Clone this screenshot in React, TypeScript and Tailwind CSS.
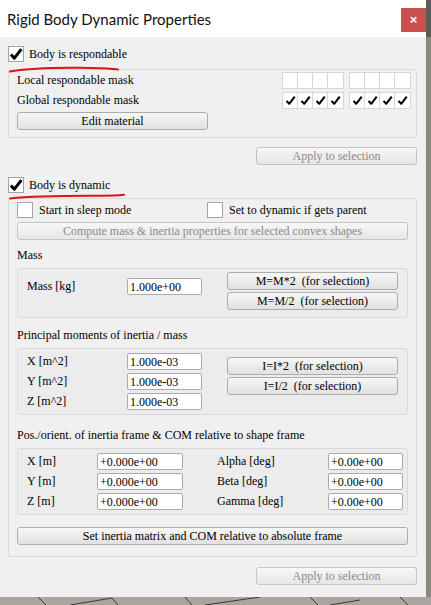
import React from "react";

const btn =
  "flex items-center justify-center h-[18px] rounded-[3px] border border-[#acacac] bg-linear-to-b from-[#f7f7f7] to-[#e1e1e1] leading-none";
const btnOff =
  "flex items-center justify-center h-[18px] rounded-[3px] border border-[#c4c4c4] bg-linear-to-b from-[#f7f7f7] to-[#e6e6e6] leading-none text-[#8a8a8a]";
const field =
  "h-[17px] bg-white border border-[#a9abb0] rounded-[2px] pl-[2px] flex items-center leading-none";
const group = "border border-[#d9d9d9] rounded-[3px]";

function Check({ size = 12, weight = 2.2 }: { size?: number; weight?: number }) {
  return (
    <svg width={size} height={size} viewBox="0 0 12 12">
      <path d="M1.6 6.4 L4.6 9.6 L10.6 1.8" fill="none" stroke="#000" strokeWidth={weight} strokeLinejoin="round" />
    </svg>
  );
}

function Box({ checked }: { checked?: boolean }) {
  return (
    <div className="w-[16px] h-[16px] bg-white border border-[#a3a3a3] flex items-center justify-center shrink-0">
      {checked && <Check size={14} weight={2.6} />}
    </div>
  );
}

function Mask({ checked }: { checked?: boolean }) {
  return (
    <div className="flex border border-[#d6d6d6] bg-white">
      {[0, 1, 2, 3].map((i) => (
        <div
          key={i}
          className={`w-[15px] h-[15px] flex items-center justify-center ${i < 3 ? "border-r border-[#d6d6d6]" : ""}`}
        >
          {checked && <Check size={11} />}
        </div>
      ))}
    </div>
  );
}

function MaskRow({ label, checked }: { label: string; checked?: boolean }) {
  return (
    <div className="flex items-center justify-between h-[16px] -mr-[3px]">
      <span>{label}</span>
      <div className="flex gap-[5px]">
        <Mask checked={checked} />
        <Mask checked={checked} />
      </div>
    </div>
  );
}

export default function App() {
  return (
    <div className="w-[431px] h-[605px] overflow-hidden bg-[#aaa69d] flex flex-col font-['Liberation_Serif',serif] text-[12px] text-black">
      <div className="flex h-[597px]">
        <div className="relative w-[426px] h-full bg-[#f0f0f0] flex flex-col">
          {/* title bar */}
          <div className="h-[37px] bg-white flex shrink-0">
            <div className="pl-[7px] pt-[8px] font-['Lato',sans-serif] text-[15px] text-[#111]">
              Rigid Body Dynamic Properties
            </div>
            <div className="ml-auto mt-[8px] w-[25px] h-[24px] bg-[#c9504f] flex items-center justify-center text-white font-['Liberation_Sans',sans-serif] text-[13px] font-bold">
              ×
            </div>
          </div>

          <div className="pl-[8px] pr-[9px] flex flex-col">
            <div className="mt-[9px] flex items-center gap-[5px] h-[16px]">
              <Box checked />
              <span>Body is respondable</span>
            </div>

            <div className={`${group} mt-[7px] px-[8px] pt-[2px] pb-[7px] flex flex-col`}>
              <MaskRow label="Local respondable mask" />
              <div className="mt-[4px]">
                <MaskRow label="Global respondable mask" checked />
              </div>
              <div className={`${btn} mt-[4px] w-[191px]`}>Edit material</div>
            </div>

            <div className={`${btnOff} mt-[9px] self-end w-[161px]`}>Apply to selection</div>

            <div className="mt-[12px] flex items-center gap-[5px] h-[16px]">
              <Box checked />
              <span>Body is dynamic</span>
            </div>

            <div className={`${group} mt-[5px] px-[8px] pt-[3px] pb-[11px] flex flex-col`}>
              <div className="flex items-center h-[16px]">
                <div className="w-[190px] flex items-center gap-[6px]">
                  <Box />
                  <span>Start in sleep mode</span>
                </div>
                <div className="flex items-center gap-[6px]">
                  <Box />
                  <span>Set to dynamic if gets parent</span>
                </div>
              </div>
              <div className={`${btnOff} mt-[4px]`}>Compute mass &amp; inertia properties for selected convex shapes</div>

              <div className="mt-[6px] h-[18px] leading-[18px]">Mass</div>
              <div className={`${group} mt-[4px] h-[50px] pl-[9px] pt-[3px] flex items-start bg-[#ececec]`}>
                <div className="w-[100px] mt-[6px] h-[17px] leading-[17px]">Mass [kg]</div>
                <div className={`${field} mt-[6px] w-[75px]`}>1.000e+00</div>
                <div className="ml-[25px] w-[171px] flex flex-col gap-[2px]">
                  <div className={btn}>M=M*2&nbsp;&nbsp;(for selection)</div>
                  <div className={btn}>M=M/2&nbsp;&nbsp;(for selection)</div>
                </div>
              </div>

              <div className="mt-[8px] h-[18px] leading-[18px]">Principal moments of inertia / mass</div>
              <div className={`${group} mt-[4px] h-[67px] pl-[9px] pt-[4px] flex items-start bg-[#ececec]`}>
                <div className="flex flex-col gap-[3px]">
                  {["X [m^2]", "Y [m^2]", "Z [m^2]"].map((l) => (
                    <div key={l} className="flex items-center">
                      <div className="w-[100px] h-[17px] leading-[17px]">{l}</div>
                      <div className={`${field} w-[75px]`}>1.000e-03</div>
                    </div>
                  ))}
                </div>
                <div className="ml-[25px] mt-[4px] w-[171px] flex flex-col gap-[2px]">
                  <div className={btn}>I=I*2&nbsp;&nbsp;(for selection)</div>
                  <div className={btn}>I=I/2&nbsp;&nbsp;(for selection)</div>
                </div>
              </div>

              <div className="mt-[11px] h-[18px] leading-[18px]">Pos./orient. of inertia frame &amp; COM relative to shape frame</div>
              <div className={`${group} mt-[4px] h-[67px] pl-[9px] pt-[4px] flex flex-col gap-[3px] bg-[#ececec]`}>
                {[
                  ["X [m]", "Alpha [deg]"],
                  ["Y [m]", "Beta [deg]"],
                  ["Z [m]", "Gamma [deg]"],
                ].map(([a, b]) => (
                  <div key={a} className="flex items-center">
                    <div className="w-[70px] h-[17px] leading-[17px]">{a}</div>
                    <div className={`${field} w-[86px]`}>+0.000e+00</div>
                    <div className="ml-[34px] w-[111px] h-[17px] leading-[17px]">{b}</div>
                    <div className={`${field} w-[75px]`}>+0.00e+00</div>
                  </div>
                ))}
              </div>

              <div className={`${btn} mt-[12px]`}>Set inertia matrix and COM relative to absolute frame</div>
            </div>

            <div className={`${btnOff} mt-[10px] self-end w-[161px]`}>Apply to selection</div>
          </div>

          {/* hand-drawn red underlines */}
          <svg className="absolute top-0 left-0 pointer-events-none" width="426" height="597">
            <path
              d="M10 71.5 C 28 68.5, 50 67.5, 80 67.8 S 110 69, 118 69.5"
              fill="none"
              stroke="#d8141a"
              strokeWidth="2"
              strokeLinecap="round"
            />
            <path
              d="M10 198.5 C 28 196.5, 55 195.8, 90 195.8 S 118 195.2, 124 194.8"
              fill="none"
              stroke="#d8141a"
              strokeWidth="2"
              strokeLinecap="round"
            />
          </svg>
        </div>
        <div className="flex-1 flex flex-col">
          <div className="h-[37px] bg-[#5b5b5b]" />
          <div className="flex-1 bg-[#8d887e]" />
        </div>
      </div>
      <svg width="431" height="8" className="shrink-0">
        <path d="M38 0 L46 8 M70 8 L112 1 L118 8 M185 0 L192 8 M205 8 L260 0 M310 0 L318 8 M330 8 L360 3 M400 0 L408 8" stroke="#3a3a3a" strokeWidth="1" fill="none" />
      </svg>
    </div>
  );
}
